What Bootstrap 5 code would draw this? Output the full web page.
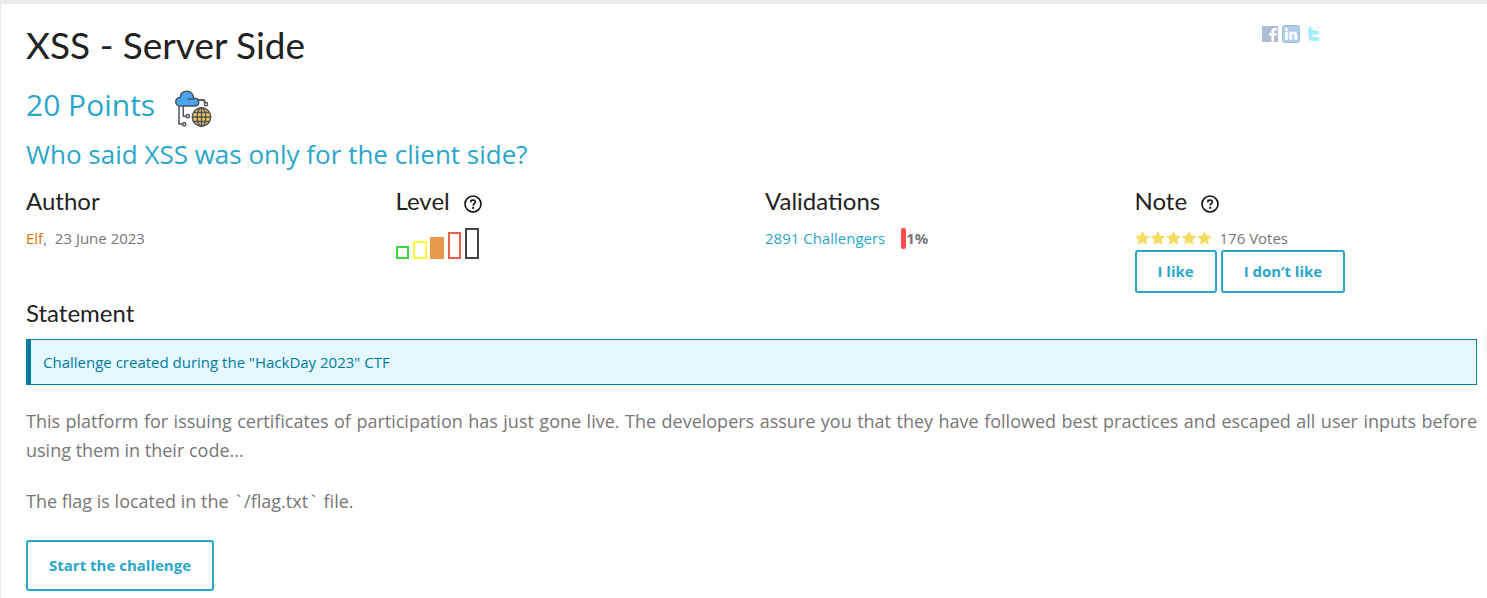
<!DOCTYPE html>
<html lang="en">
<head>
<meta charset="utf-8">
<meta name="viewport" content="width=device-width, initial-scale=1">
<title>XSS - Server Side</title>
<link href="https://cdn.jsdelivr.net/npm/bootstrap@5.3.0/dist/css/bootstrap.min.css" rel="stylesheet">
<style>
  body { font-family: "Open Sans", "Noto Sans", sans-serif; font-size: 15px; line-height: 24px; color: #777; background: #fff; }
  a { color: #2ba6cb; text-decoration: none; }
  .page { border-top: 4px solid #ebebeb; border-left: 1px solid #ebebeb; padding: 20px 10px 8px 25px; min-height: 100vh; }
  .page .row { --bs-gutter-x: 27px; }
  h1, h4 { font-family: Lato, "Open Sans", sans-serif; color: #222; font-weight: 400; margin: 0; }
  h1 { font-size: 37px; line-height: 42px; }
  h2 { font-size: 30px; line-height: 46px; font-weight: 400; color: #2ba6cb; margin: 0; }
  h3 { font-size: 26px; line-height: 44px; font-weight: 400; color: #2ba6cb; margin: 0; }
  h4 { font-size: 24px; line-height: 34px; }
  .social a { opacity: .4; display: block; line-height: 0; }
  .author { color: #e2710c; }
  .help { margin: 6px 0 0 14px; }
  .bars { margin-top: 10px; }
  .gauge { width: 5px; height: 21px; border-radius: 2px; background: #ff4b4b; }
  .btn-line { --bs-btn-color: #2ba6cb; --bs-btn-border-color: #2ba6cb; --bs-btn-hover-color: #fff; --bs-btn-hover-bg: #2ba6cb;
    --bs-btn-border-width: 2px; --bs-btn-border-radius: 3px; --bs-btn-font-size: 15px; --bs-btn-font-weight: 700;
    --bs-btn-line-height: 19px; --bs-btn-padding-x: 21px; --bs-btn-padding-y: 10px; }
  .btn-start { --bs-btn-padding-y: 14px; }
  .note-box { background: #e5f8fe; color: #007c9f; border: 1px solid #007c9f; border-left-width: 5px; padding: 10px 12px; margin: 9px 0 22px; }
  .statement { margin-top: 3px; }
  .statement p { font-size: 18px; line-height: 29px; text-align: justify; margin: 0 0 22px; }
  .tick { font-family: "Liberation Mono", monospace; }
  .edge-shadow { width: 40px; height: 40px; right: -43px; top: 324px; border-radius: 50%; box-shadow: 0 0 8px rgba(0,0,0,.25); }
</style>
</head>
<body>
<svg class="d-none" aria-hidden="true">
  <symbol id="help" viewBox="0 0 18 18">
    <circle cx="9" cy="9" r="8" fill="none" stroke="#111" stroke-width="1.6"/>
    <path d="M6.7 7.3C6.7 5.8 7.7 5 9 5s2.3.8 2.3 2.1c0 1.6-2.2 1.700-2.200 3.500" fill="none" stroke="#111" stroke-width="1.6"/>
    <circle cx="9.1" cy="12.9" r="1.1" fill="#111"/>
  </symbol>
  <symbol id="star" viewBox="0 0 16 15">
    <path d="M8 .5 10.2 5.2 15.4 5.8 11.5 9.3 12.6 14.3 8 11.8 3.4 14.3 4.5 9.3.6 5.8 5.8 5.2Z" fill="#f5dc5f" stroke="#f5dc5f" stroke-width=".6" stroke-linejoin="round"/>
  </symbol>
</svg>

<main class="page">
  <div class="row">
    <div class="col-10"><h1>XSS - Server Side</h1></div>
    <div class="col-2">
      <div class="social d-flex gap-1 align-items-center">
        <a href="#" class="ms-1" aria-label="Facebook"><svg width="16" height="20" viewBox="1 0 16 20"><rect x="1" y="2" width="16" height="16" fill="#3b5998"/><path d="M13.200 17.500v-6h2.200l.4-2.500h-2.600V7.800c0-.9.4-1.300 1.400-1.300H16V4.200c-3.800-.7-5.600.4-5.600 3.200V9H8.200v2.500h2.200v6Z" fill="#fff"/></svg></a>
        <a href="#" aria-label="LinkedIn"><svg width="18" height="20" viewBox="0 0 18 20"><rect x=".5" y="1.500" width="17" height="17" rx="2" fill="#3a85c8" stroke="#1a5a98"/><path d="M3.300 8h2.400v7.500H3.300ZM3.300 4.500h2.400v2.200H3.300ZM7.500 8h2.300v1c1.200-1.800 5.200-1.600 5.200 2v4.500h-2.500v-4c0-2-2.500-1.900-2.500 0v4H7.500Z" fill="#fff" stroke="#fff" stroke-width=".5"/></svg></a>
        <a href="#" aria-label="Twitter"><svg width="18" height="20" viewBox="0 0 18 20"><rect x="1" y="1" width="17" height="17" fill="#f4fbfe"/><path d="M6.500 5v7q0 3 3 3h4M6.500 8.500H13" fill="none" stroke="#22d0f2" stroke-width="4" stroke-linecap="round"/></svg></a>
      </div>
    </div>
  </div>

  <div class="d-flex align-items-center gap-3 mt-3">
    <h2>20 Points</h2>
    <svg class="mt-2 ms-1" width="37" height="38" viewBox="0 0 37 38" fill="none" stroke="#4d5360" stroke-width="1.500" role="img" aria-label="Web server">
      <path d="M4 16v18h3.500M8.300 16v10.200H11M22.500 10h6.500v2"/>
      <circle cx="9.200" cy="34.300" r="1.600"/><circle cx="12.800" cy="26.200" r="1.600"/><circle cx="31" cy="14.200" r="1.600"/>
      <path d="M5 16a4.200 4.200 0 0 1 0-8.500C5.500 3.500 8.500 1.200 12 1.200S18.200 4 18.700 8c3 .1 5 1.700 5 4.200 0 2.400-1.800 3.800-4.200 3.800Z" fill="#4aa5ee"/>
      <path d="M12.500 9H20M22.500 10h5q2.500 0 2.500 2.500"/>
      <circle cx="26.500" cy="27" r="9.200" fill="#fcc84a"/>
      <ellipse cx="26.500" cy="27" rx="4.300" ry="9.200"/>
      <path d="M26.500 17.800v18.400M17.300 27h18.400M18.500 22.600h16M18.500 31.400h16"/>
    </svg>
  </div>
  <h3 class="mt-1">Who said XSS was only for the client side?</h3>

  <div class="row mt-2">
    <section class="col-3">
      <h4>Author</h4>
      <div class="mt-2"><a class="author" href="#">Elf</a>,&nbsp; 23 June 2023</div>
    </section>
    <section class="col-3">
      <div class="d-flex align-items-center">
        <h4>Level</h4>
        <svg class="help" width="18" height="18" role="img" aria-label="Help"><use href="#help"/></svg>
      </div>
      <svg class="d-block bars" width="83" height="31" viewBox="0 0 83 31" fill="none" stroke-width="2" role="img" aria-label="Medium">
        <rect x="1" y="19" width="11" height="11" stroke="#3fd53f"/>
        <rect x="18" y="14" width="12" height="16" stroke="#ffff38"/>
        <rect x="35" y="10" width="12" height="20" stroke="#e89a4c" fill="#e89a4c"/>
        <rect x="53" y="5" width="11" height="25" stroke="#e8614c"/>
        <rect x="70" y="1" width="12" height="29" stroke="#444"/>
      </svg>
    </section>
    <section class="col-3">
      <h4>Validations</h4>
      <div class="d-flex align-items-center mt-2">
        <a href="#">2891 Challengers</a>
        <span class="gauge ms-3"></span><strong>1%</strong>
      </div>
    </section>
    <section class="col-3">
      <div class="d-flex align-items-center">
        <h4>Note</h4>
        <svg class="help" width="18" height="18" role="img" aria-label="Help"><use href="#help"/></svg>
      </div>
      <div class="d-flex align-items-center mt-2">
        <svg width="77" height="15" role="img" aria-label="5 stars"><use href="#star" width="15" height="14"/><use href="#star" x="15.500" width="15" height="14"/><use href="#star" x="31" width="15" height="14"/><use href="#star" x="46.500" width="15" height="14"/><use href="#star" x="62" width="15" height="14"/></svg>
        <span class="ms-2">176 Votes</span>
      </div>
      <div class="d-flex gap-1">
        <button type="button" class="btn btn-line">I like</button>
        <button type="button" class="btn btn-line">I don’t like</button>
      </div>
    </section>
  </div>

  <section class="statement">
    <h4>Statement</h4>
    <div class="note-box">Challenge created during the "HackDay 2023" CTF</div>
    <p>This platform for issuing certificates of participation has just gone live. The developers assure you that they have followed best practices and escaped all user inputs before using them in their code...</p>
    <p>The flag is located in the <span class="tick">`</span>/flag.txt<span class="tick">`</span> file.</p>
    <button type="button" class="btn btn-line btn-start">Start the challenge</button>
  </section>
</main>
<div class="edge-shadow position-fixed"></div>
<script src="https://cdn.jsdelivr.net/npm/bootstrap@5.3.0/dist/js/bootstrap.bundle.min.js"></script>
</body>
</html>
